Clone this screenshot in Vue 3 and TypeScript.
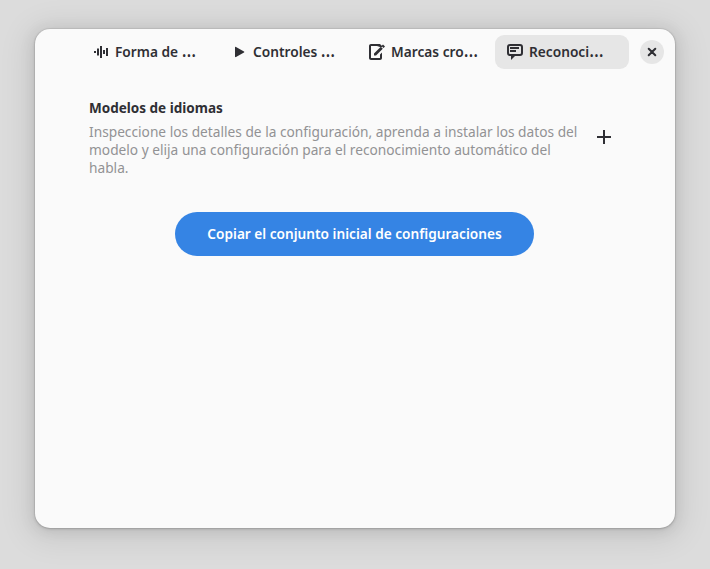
<script setup lang="ts">
import { ref } from 'vue'

interface Tab {
  id: string
  icon: 'wave' | 'play' | 'edit' | 'speech'
  label: string
}

const tabs: Tab[] = [
  { id: 'waveform', icon: 'wave', label: 'Forma de ' },
  { id: 'controls', icon: 'play', label: 'Controles ' },
  { id: 'timestamps', icon: 'edit', label: 'Marcas cro' },
  { id: 'recognition', icon: 'speech', label: 'Reconoci' },
]
const active = ref('recognition')
</script>

<template>
  <main class="desktop">
    <section class="dialog">
      <header class="header">
        <nav class="tabs">
          <button
            v-for="tab in tabs"
            :key="tab.id"
            class="tab"
            :class="{ active: tab.id === active }"
            @click="active = tab.id"
          >
            <svg class="icon" viewBox="0 0 16 16" aria-hidden="true">
              <path v-if="tab.icon === 'wave'" d="M1 7h2v2H1zM4 4.500h2v7H4zM7 2h2v12H7zM10 6h2v4h-2zM13 4h2v8h-2z" />
              <path v-else-if="tab.icon === 'play'" d="M4 3.500v9c0 .6.500.8 1 .5l8-4.500c.5-.3.5-.7 0-1L5 3c-.5-.3-1-.1-1 .5z" />
              <g v-else-if="tab.icon === 'edit'">
                <path d="M2 0C.9 0 0 .9 0 2v12c0 1.100.9 2 2 2h9c1.100 0 2-.9 2-2V8.500l-2 2V14H2V2h7l2-2z" />
                <path d="M5 9.500 11.800 2.700l2 2L7 11.500H5zM12.500 2 14 .5l2 2L14.500 4z" />
                <path d="M8 0h3l2 2v1h-2L8 2z" />
              </g>
              <g v-else>
                <path fill-rule="evenodd" d="M3 0h10a3 3 0 0 1 3 3v6a3 3 0 0 1-3 3H8l-4 4v-4H3a3 3 0 0 1-3-3V3a3 3 0 0 1 3-3zm0 2a1 1 0 0 0-1 1v6a1 1 0 0 0 1 1h10a1 1 0 0 0 1-1V3a1 1 0 0 0-1-1z" />
                <path d="M3 3h9v2H3zM3 6h6v2H3z" />
              </g>
            </svg>
            <span class="label">{{ tab.label }}<span class="more">…</span></span>
          </button>
        </nav>
        <button class="close" aria-label="Cerrar">
          <svg class="icon" viewBox="0 0 16 16"><path class="cross" d="m4.700 4.700 6.600 6.600m0-6.600-6.600 6.600" /></svg>
        </button>
      </header>

      <div class="content">
        <div class="group">
          <div class="copy">
            <h1>Modelos de idiomas</h1>
            <p>Inspeccione los detalles de la configuración, aprenda a instalar los datos del modelo y elija una configuración para el reconocimiento automático del habla.</p>
          </div>
          <button class="add" aria-label="Añadir">
            <svg class="icon" viewBox="0 0 16 16"><path d="M7 1h2v6h6v2H9v6H7V9H1V7h6z" /></svg>
          </button>
        </div>
        <button class="primary"><span>Copiar el conjunto inicial de configuraciones</span></button>
      </div>
    </section>
  </main>
</template>

<style>
body {
  margin: 0;
  overflow: hidden;
}
</style>

<style scoped>
.desktop {
  box-sizing: border-box;
  width: 710px;
  height: 569px;
  padding: 29px 35px 41px;
  background: #dcdcdc;
  color: #2f2f34;
  font: 14.670px/18px "Noto Sans", sans-serif;
}

.dialog {
  height: 499px;
  border-radius: 15px;
  background: #fafafa;
  box-shadow: 0 0 0 1px rgb(0 0 0 / 5%), 0 1px 3px rgb(0 0 0 / 18%), 0 2px 14px 3px rgb(0 0 0 / 8%), 0 4px 30px 10px rgb(0 0 0 / 7%);
}

button {
  margin: 0;
  padding: 0;
  border: 0;
  background: none;
  color: inherit;
  font: inherit;
}

.header {
  display: flex;
  align-items: center;
  box-sizing: border-box;
  height: 46px;
  padding: 0 11px 0 46px;
}

.tabs {
  display: flex;
  gap: 4px;
}

.tab {
  display: flex;
  align-items: center;
  gap: 6px;
  box-sizing: border-box;
  width: 134px;
  height: 34px;
  padding: 0 12px;
  border-radius: 9px;
  font-weight: 650;
}

.label {
  padding-bottom: 2px;
  white-space: pre;
  transform: scaleX(0.935);
  transform-origin: left;
}

.more {
  font-size: 19px;
  font-weight: 550;
  line-height: 1px;
}

.tab.active {
  background: #e6e6e6;
}

.icon {
  display: block;
  flex: none;
  width: 16px;
  height: 16px;
  fill: currentColor;
}

.close {
  display: grid;
  place-items: center;
  width: 24px;
  height: 24px;
  margin-left: 11px;
  border-radius: 50%;
  background: #e6e6e6;
}

.cross {
  fill: none;
  stroke: currentColor;
  stroke-width: 2;
  stroke-linecap: round;
}

.content {
  display: flex;
  flex-direction: column;
  align-items: center;
  padding: 23px 54px 0;
}

.group {
  display: flex;
  width: 100%;
}

/* Text is set slightly condensed; the wider box compensates for the scale. */
.copy {
  flex: none;
  width: 526px;
  margin-right: -34px;
  transform: scaleX(0.936);
  transform-origin: left;
}

h1 {
  margin: 0 0 6px;
  font: inherit;
  font-weight: 700;
  transform: scaleX(0.985);
  transform-origin: left;
}

p {
  margin: 0;
  color: #929294;
}

.add {
  display: grid;
  place-items: center;
  width: 34px;
  height: 34px;
  margin: 22px 0 0 6px;
}

.primary {
  width: 359px;
  height: 44px;
  margin: 36px 2px 0 0;
  border-radius: 22px;
  background: #3584e4;
  color: #fff;
  font-weight: 650;
  white-space: nowrap;
}

.primary span {
  display: block;
  padding-bottom: 2px;
  transform: scaleX(0.932);
}
</style>
